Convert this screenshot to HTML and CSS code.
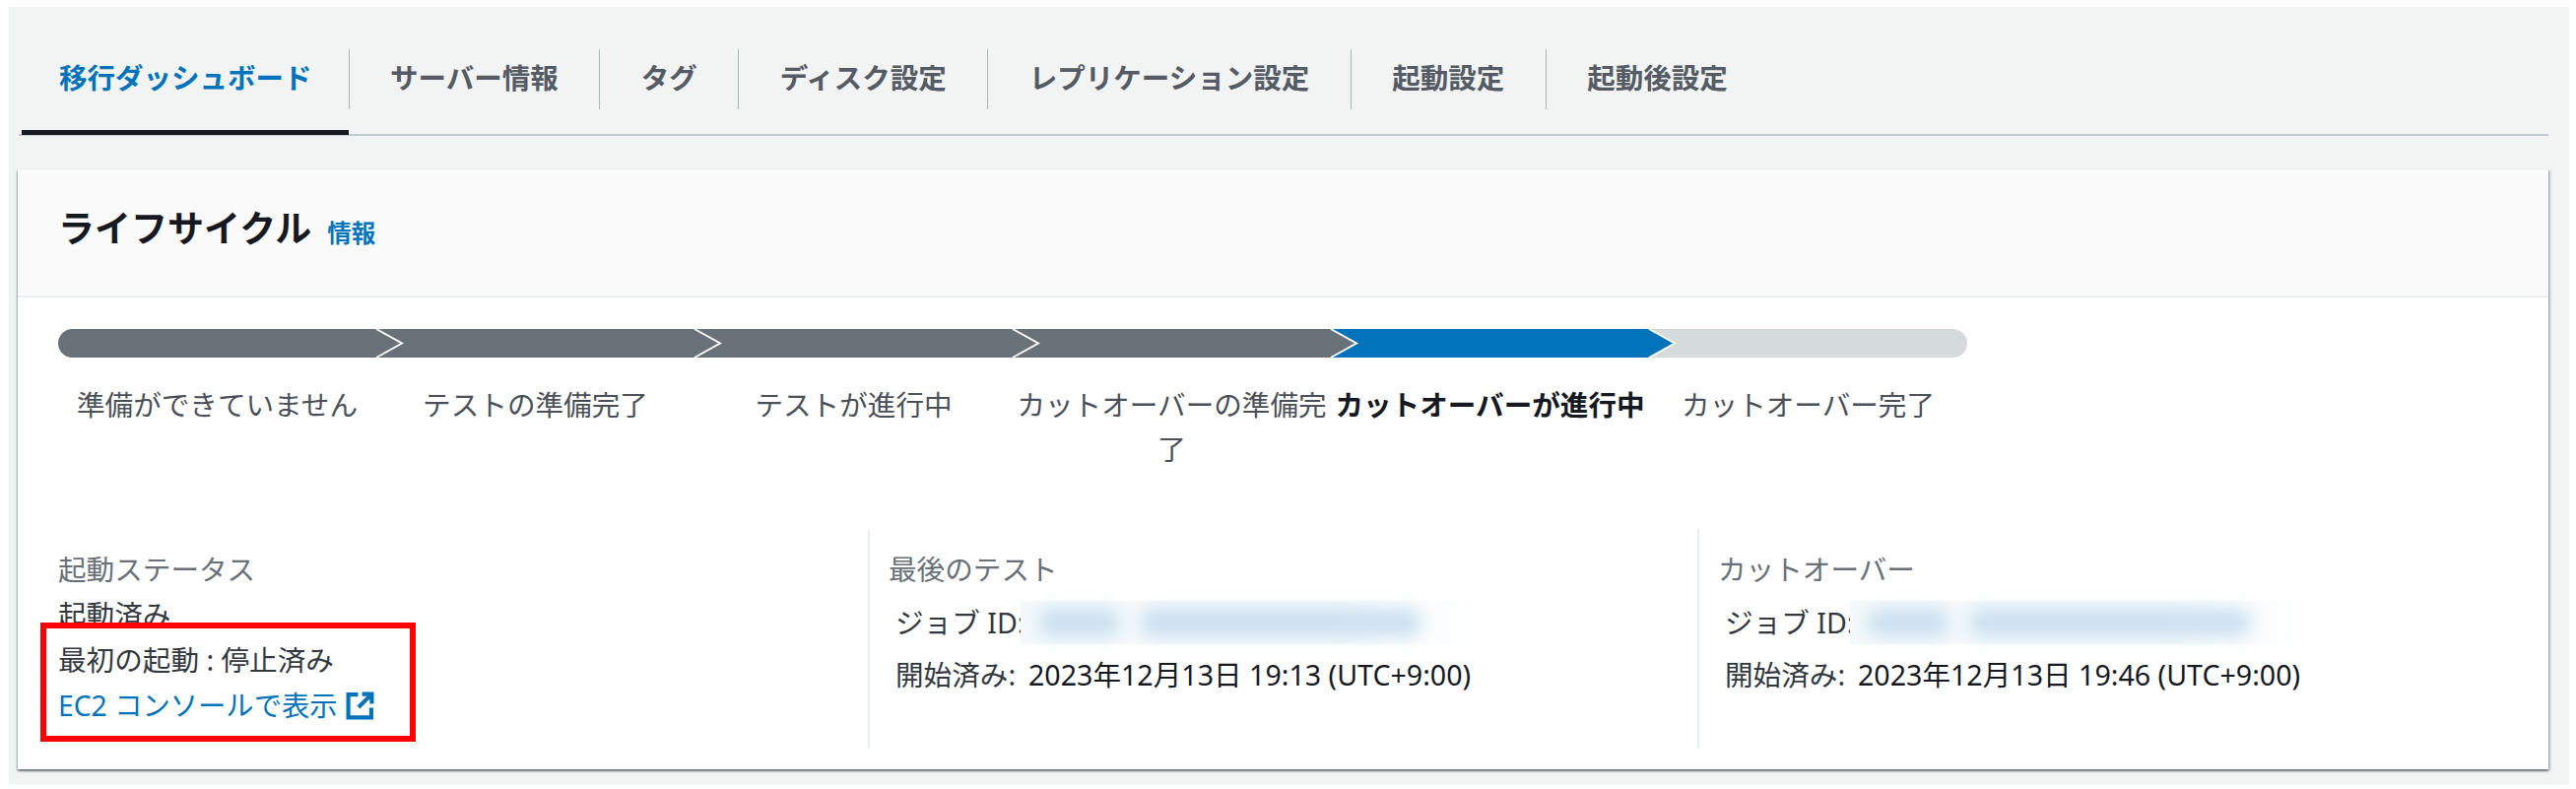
FILE: index.html
```html
<!DOCTYPE html>
<html lang="ja">
<head>
<meta charset="utf-8">
<title>移行ダッシュボード</title>
<link rel="stylesheet" href="styles.css">
</head>
<body>
<main class="page">
  <nav class="tabs">
    <a class="tab tab-active">移行ダッシュボード</a>
    <a class="tab">サーバー情報</a>
    <a class="tab">タグ</a>
    <a class="tab">ディスク設定</a>
    <a class="tab">レプリケーション設定</a>
    <a class="tab">起動設定</a>
    <a class="tab tab-last">起動後設定</a>
  </nav>
  <section class="card">
    <header class="card-header">
      <h2 class="card-title">ライフサイクル</h2>
      <a class="info-link">情報</a>
    </header>
    <div class="card-body">
      <div class="stepper">
        <div class="step step-done">
          <div class="bar bar-first"><svg class="chev" viewBox="0 0 28 29"><path class="chev-fill" d="M0 0L26 14.5L0 29Z"/><path class="chev-line" d="M0 0L26 14.5L0 29"/></svg></div>
          <div class="step-label">準備ができていません</div>
        </div>
        <div class="step step-done">
          <div class="bar"><svg class="chev" viewBox="0 0 28 29"><path class="chev-fill" d="M0 0L26 14.5L0 29Z"/><path class="chev-line" d="M0 0L26 14.5L0 29"/></svg></div>
          <div class="step-label">テストの準備完了</div>
        </div>
        <div class="step step-done">
          <div class="bar"><svg class="chev" viewBox="0 0 28 29"><path class="chev-fill" d="M0 0L26 14.5L0 29Z"/><path class="chev-line" d="M0 0L26 14.5L0 29"/></svg></div>
          <div class="step-label">テストが進行中</div>
        </div>
        <div class="step step-done">
          <div class="bar"><svg class="chev" viewBox="0 0 28 29"><path class="chev-fill" d="M0 0L26 14.5L0 29Z"/><path class="chev-line" d="M0 0L26 14.5L0 29"/></svg></div>
          <div class="step-label">カットオーバーの準備完了</div>
        </div>
        <div class="step step-current">
          <div class="bar"><svg class="chev" viewBox="0 0 28 29"><path class="chev-fill" d="M0 0L26 14.5L0 29Z"/><path class="chev-line" d="M0 0L26 14.5L0 29"/></svg></div>
          <div class="step-label">カットオーバーが進行中</div>
        </div>
        <div class="step step-todo">
          <div class="bar bar-last"></div>
          <div class="step-label">カットオーバー完了</div>
        </div>
      </div>
      <div class="columns">
        <div class="col col-first">
          <div class="col-label">起動ステータス</div>
          <div class="col-line">起動済み</div>
          <div class="col-line">最初の起動 : 停止済み</div>
          <a class="ext-link">EC2 コンソールで表示
            <svg class="ext-icon" viewBox="0 0 28 28"><path d="M12 3H2.500V25.500H25V16"/><path d="M16 2.500H25.500V12"/><path d="M25 3L12.500 15.500"/></svg>
          </a>
          <div class="highlight"></div>
        </div>
        <div class="col">
          <div class="col-label">最後のテスト</div>
          <div class="col-line kv kv-id"><span class="kv-key">ジョブ ID:</span><span class="redact"><i class="pill pill-a"></i><i class="pill pill-b"></i></span></div>
          <div class="col-line kv"><span class="kv-key">開始済み:</span><span class="kv-val">2023年12月13日 19:13 (UTC+9:00)</span></div>
        </div>
        <div class="col">
          <div class="col-label">カットオーバー</div>
          <div class="col-line kv kv-id"><span class="kv-key">ジョブ ID:</span><span class="redact"><i class="pill pill-a"></i><i class="pill pill-b"></i></span></div>
          <div class="col-line kv"><span class="kv-key">開始済み:</span><span class="kv-val">2023年12月13日 19:46 (UTC+9:00)</span></div>
        </div>
      </div>
    </div>
  </section>
</main>
</body>
</html>
```

FILE: styles.css
```css
* { box-sizing: border-box; }
html, body { height: 100%; }
body {
  margin: 0;
  padding: 7px 7px 4px 9px;
  background: #fff;
  font-family: "Noto Sans", "Noto Sans CJK JP", sans-serif;
  font-size: 28.6px;
  color: #33383f;
  overflow: hidden;
}
.page {
  height: 790px;
  background: #f2f3f3;
  padding: 43px 21px 0 9px;
}
.tabs {
  display: flex;
  align-items: flex-start;
  height: 88px;
  margin-left: 1px;
  padding-left: 3px;
  border-bottom: 2px solid #c3cbcf;
}
.tab {
  position: relative;
  display: flex;
  align-items: center;
  height: 61px;
  padding: 0 41.5px 7px;
  border-right: 1px solid #aab7b8;
  font-size: 28.5px;
  font-weight: 700;
  color: #545b64;
  white-space: nowrap;
}
.tab-last { border-right: 0; }
.tab-active {
  padding: 0 37px 7px 38px;
  color: #0073bb;
}
.tab-active::after {
  content: "";
  position: absolute;
  left: 0;
  right: 0;
  bottom: -26px;
  height: 5px;
  background: #16191f;
}
.card {
  margin-top: 34px;
  height: 609px;
  background: #fff;
  box-shadow: 0 2px 2px rgba(0, 28, 36, .45), 2px 1px 2px rgba(0, 28, 36, .2), -1px 1px 2px rgba(0, 28, 36, .2);
}
.card-header {
  display: flex;
  align-items: baseline;
  gap: 16px;
  height: 130px;
  padding: 30px 41px 0;
  background: #fafafa;
  border-bottom: 2px solid #eaeded;
}
.card-title {
  margin: 0;
  font-size: 37px;
  font-weight: 700;
  line-height: 60px;
  color: #16191f;
}
.info-link {
  font-size: 24.5px;
  font-weight: 700;
  color: #0073bb;
}
.card-body {
  padding: 32px 0 0 41px;
}
.stepper {
  display: flex;
}
.step {
  flex: 0 0 323px;
  width: 323px;
}
.bar {
  position: relative;
  height: 29px;
  background: #687078;
}
.bar-first { border-radius: 15px 0 0 15px; }
.bar-last { border-radius: 0 15px 15px 0; }
.step-done { color: #687078; }
.step-current .bar { background: #0073bb; color: #0073bb; }
.step-todo .bar { background: #d5dbdb; }
.chev {
  position: absolute;
  z-index: 1;
  top: 0;
  right: -28px;
  width: 28px;
  height: 29px;
  overflow: visible;
}
.chev-fill { fill: currentColor; }
.chev-line { fill: none; stroke: #fff; stroke-width: 2; }
.step-label {
  padding: 0 2px;
  margin-top: 25px;
  height: 97px;
  line-height: 45px;
  text-align: center;
  color: #4a5057;
}
.step-current .step-label {
  font-weight: 700;
  color: #16191f;
}
.columns {
  display: grid;
  grid-template-columns: 822px 842px 1fr;
  margin-top: 52px;
  height: 223px;
}
.col {
  padding-left: 19px;
  border-left: 2px solid #eaeded;
  line-height: 46px;
  padding-top: 18px;
}
.col-first {
  position: relative;
  padding-left: 0;
  border-left: 0;
}
.col-label { color: #687078; }
.col-line { white-space: nowrap; }
.kv {
  display: flex;
  align-items: center;
  padding-left: 7px;
  height: 53px;
}
.kv-id { margin-top: 4px; }
.kv-key { width: 135px; flex: none; }
.kv-id .kv-key { width: 127px; }
.kv-val { white-space: nowrap; color: #16191f; }
.redact {
  display: flex;
  align-items: center;
  gap: 22px;
  width: 470px;
  height: 44px;
  padding-left: 18px;
  background: linear-gradient(90deg, #f3f8fb 0, #f3f8fb 65%, #fff 100%);
}
.pill {
  display: block;
  height: 28px;
  background: #cbe1f0;
  border-radius: 14px;
  filter: blur(8px);
}
.pill-a { width: 82px; }
.pill-b { width: 285px; }
.ext-link {
  display: flex;
  align-items: center;
  gap: 8px;
  font-size: 28.3px;
  color: #0073bb;
  white-space: nowrap;
}
.ext-icon {
  width: 29px;
  height: 29px;
  fill: none;
  stroke: #0073bb;
  stroke-width: 4;
}
.highlight {
  position: absolute;
  left: -18px;
  top: 95px;
  width: 381px;
  height: 121px;
  border: 6px solid #f00;
  pointer-events: none;
}
```
